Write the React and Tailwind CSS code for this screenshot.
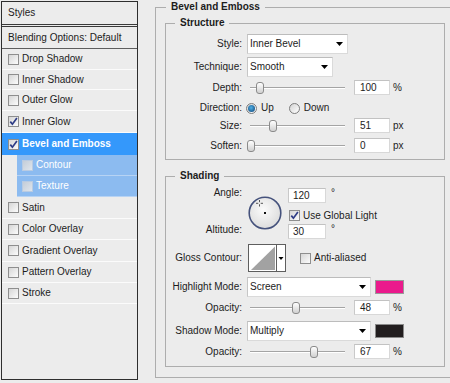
import React from "react";

// Layer Style dialog (Photoshop) – Bevel and Emboss page

const styleRows = [
  { name: "Drop Shadow", h: "h-[21px]" },
  { name: "Inner Shadow", h: "h-[20px]" },
  { name: "Outer Glow", h: "h-[21px]" },
  { name: "Inner Glow", h: "h-[22px]", checked: true },
  { name: "Bevel and Emboss", h: "h-[22px]", checked: true, active: true },
  { name: "Contour", h: "h-[21px]", sub: true },
  { name: "Texture", h: "h-[21px]", sub: true },
  { name: "Satin", h: "h-[22px]" },
  { name: "Color Overlay", h: "h-[21px]" },
  { name: "Gradient Overlay", h: "h-[22px]" },
  { name: "Pattern Overlay", h: "h-[21px]" },
  { name: "Stroke", h: "h-[21px]" },
];

function Check({ checked, dim, className = "" }) {
  return (
    <span
      className={`flex h-[11px] w-[11px] shrink-0 items-center justify-center border ${
        dim
          ? "border-[#b9cbe2] bg-linear-to-br from-[#c4cdd8] to-[#dfe5ec]"
          : "border-[#8e8e8e] bg-linear-to-br from-[#d6d6d6] to-[#fcfcfc]"
      } ${className}`}
    >
      {checked && (
        <svg width="9" height="9" viewBox="0 0 9 9">
          <path d="M1.3 4.6 L3.4 7.2 L7.9 1" fill="none" stroke="#2e3c86" strokeWidth="1.7" />
        </svg>
      )}
    </span>
  );
}

function StylesPanel() {
  return (
    <div className="ml-[1px] mt-[1px] flex h-[379px] w-[137px] shrink-0 flex-col border border-[#2e2e2e]">
      <div className="flex h-[25px] items-center border-b-[3px] border-double border-[#3a3a3a] pl-[6px]">Styles</div>
      <div className="flex h-[22px] items-center border-b border-[#5e5e5e] pl-[6px]">Blending Options: Default</div>
      {styleRows.map((r) =>
        r.sub ? (
          <div key={r.name} className={`flex ${r.h} pl-[15px]`}>
            <div className="flex flex-1 items-center border-b border-[#b7d3f4] bg-[#8cbbf0] pl-[5px] text-white">
              <Check dim />
              <span className="ml-[3px]">{r.name}</span>
            </div>
          </div>
        ) : r.active ? (
          <div key={r.name} className={`flex ${r.h} items-center bg-[#3498fb] pl-[6px] font-bold text-white`}>
            <Check checked />
            <span className="ml-[3px]">{r.name}</span>
          </div>
        ) : (
          <div key={r.name} className={`flex ${r.h} items-center border-b border-[#fbfbfb] pl-[6px]`}>
            <Check checked={r.checked} />
            <span className="ml-[3px]">{r.name}</span>
          </div>
        )
      )}
    </div>
  );
}

function Label({ children }) {
  return <span className="w-[76px] shrink-0 text-right">{children}</span>;
}

function Arrow() {
  return (
    <svg width="7" height="4" viewBox="0 0 7 4" className="shrink-0">
      <path d="M0 0h7L3.5 4z" fill="#000" />
    </svg>
  );
}

function Select({ value, w }) {
  return (
    <div
      className={`ml-[5px] flex h-full shrink-0 items-center justify-between border border-[#dadada] border-l-[#c6c6c6] border-t-[#bcbcbc] bg-white pl-[2px] pr-[4px] ${w}`}
    >
      <span>{value}</span>
      <Arrow />
    </div>
  );
}

function Slider({ pos }) {
  return (
    <div className="relative ml-[5px] h-full w-[100px] shrink-0">
      <div className="absolute left-[3px] right-[2px] top-[7px] h-[2px] border-b border-t border-b-white border-t-[#a4a4a4]" />
      <div
        className="absolute top-[2px] h-[12px] w-[8px] rounded-[3px] border border-[#8b8b8b] bg-linear-to-b from-white to-[#d0d0d0]"
        style={{ left: pos }}
      />
    </div>
  );
}

function Field({ value, className = "ml-[7px] w-[36px] pl-[5px]" }) {
  return (
    <div className={`flex h-full shrink-0 items-center border border-[#d8d8d8] border-l-[#c9c9c9] border-t-[#c2c2c2] bg-white ${className}`}>
      {value}
    </div>
  );
}

function SliderRow({ label, pos, value, unit, mt }) {
  return (
    <div className={`flex h-[15px] items-center ${mt}`}>
      <Label>{label}</Label>
      <Slider pos={pos} />
      <Field value={value} />
      <span className="ml-[3px]">{unit}</span>
    </div>
  );
}

function Radio({ on, className = "" }) {
  return (
    <span
      className={`flex h-[11px] w-[11px] shrink-0 items-center justify-center rounded-full border border-[#7d7d7d] bg-linear-to-br from-[#d4d4d4] to-white ${className}`}
    >
      {on && <span className="h-[7px] w-[7px] rounded-full bg-radial-[at_45%_40%] from-[#4fb0e6] to-[#0b3e72]" />}
    </span>
  );
}

function AngleDial() {
  return (
    <svg width="34" height="34" viewBox="0 0 34 34" className="ml-[6px] mt-[14px] shrink-0">
      <defs>
        <radialGradient id="dialFill" cx="45%" cy="40%" r="65%">
          <stop offset="0" stopColor="#fbfbfb" />
          <stop offset="1" stopColor="#dadada" />
        </radialGradient>
      </defs>
      <circle cx="17" cy="17" r="15.8" fill="url(#dialFill)" stroke="#45527c" strokeWidth="1.6" />
      <path d="M11.5 4v2.2M11.5 8.3v2.2M8 7.3h2.3M12.7 7.3h2.3" stroke="#555" strokeWidth="1" />
      <rect x="16" y="16" width="2" height="2" fill="#111" />
    </svg>
  );
}

function ContourPicker() {
  return (
    <svg width="38" height="28" viewBox="0 0 38 28" className="ml-[6px] shrink-0">
      <rect x="0.5" y="0.5" width="37" height="27" fill="#fff" stroke="#5e5e5e" />
      <path d="M3 26 L27 2.5 L27 26 Z" fill="#a2a2a2" />
      <line x1="28.5" y1="1" x2="28.5" y2="27" stroke="#5e5e5e" />
      <path d="M30.5 13h5l-2.5 3z" fill="#000" />
    </svg>
  );
}

function Degree({ value }) {
  return (
    <div className="flex h-[15px]">
      <Field value={value} className="w-[38px] pl-[4px]" />
      <span className="ml-[5px] self-start leading-[10px]">°</span>
    </div>
  );
}

function Group({ title, className, children }) {
  return (
    <fieldset className={`w-[280px] border border-[#adadad] ${className}`}>
      <legend className="ml-[9px] px-[5px] font-bold">{title}</legend>
      {children}
    </fieldset>
  );
}

export default function App() {
  return (
    <div className="flex h-[383px] w-[450px] overflow-hidden bg-[#ececec] font-['Liberation_Sans',Arial,sans-serif] text-[10px] leading-[12px] text-[#1c1c1c]">
      <StylesPanel />

      <div className="ml-[17px] shrink-0 pt-[1px]">
        <fieldset className="w-[320px] border border-[#adadad] pb-[10px] pl-[9px]">
          <legend className="ml-[1px] px-[5px] font-bold">Bevel and Emboss</legend>

          <Group title="Structure" className="mt-[4px] pb-[6px]">
            <div className="mt-[5px] flex h-[20px] items-center">
              <Label>Style:</Label>
              <Select value="Inner Bevel" w="w-[101px]" />
            </div>
            <div className="mt-[3px] flex h-[20px] items-center">
              <Label>Technique:</Label>
              <Select value="Smooth" w="w-[86px]" />
            </div>
            <SliderRow label="Depth:" pos={9} value="100" unit="%" mt="mt-[3px]" />
            <div className="mt-[6px] flex h-[14px] items-center">
              <Label>Direction:</Label>
              <Radio on className="ml-[4px]" />
              <span className="ml-[4px]">Up</span>
              <Radio className="ml-[15px]" />
              <span className="ml-[4px]">Down</span>
            </div>
            <SliderRow label="Size:" pos={22} value="51" unit="px" mt="mt-[3px]" />
            <SliderRow label="Soften:" pos={0} value="0" unit="px" mt="mt-[5px]" />
          </Group>

          <Group title="Shading" className="mt-[10px] pb-[7px]">
            <div className="flex h-[57px]">
              <div className="w-[76px] shrink-0 text-right">
                <div className="mt-[5px]">Angle:</div>
                <div className="mt-[25px]">Altitude:</div>
              </div>
              <AngleDial />
              <div className="ml-[6px] flex flex-col">
                <div className="mt-[6px]">
                  <Degree value="120" />
                </div>
                <div className="mt-[6px] flex h-[13px] items-center">
                  <Check checked className="ml-[1px]" />
                  <span className="ml-[3px]">Use Global Light</span>
                </div>
                <div className="mt-[2px]">
                  <Degree value="30" />
                </div>
              </div>
            </div>

            <div className="mt-[5px] flex h-[28px] items-center">
              <Label>Gloss Contour:</Label>
              <ContourPicker />
              <Check className="ml-[14px]" />
              <span className="ml-[3px]">Anti-aliased</span>
            </div>

            <div className="mt-[5px] flex h-[20px] items-center">
              <Label>Highlight Mode:</Label>
              <Select value="Screen" w="w-[124px]" />
              <span className="ml-[4px] h-[14px] w-[29px] shrink-0 border border-[#9a9a9a] bg-[#ea1a8c]" />
            </div>
            <SliderRow label="Opacity:" pos={45} value="48" unit="%" mt="mt-[3px]" />
            <div className="mt-[6px] flex h-[20px] items-center">
              <Label>Shadow Mode:</Label>
              <Select value="Multiply" w="w-[124px]" />
              <span className="ml-[4px] h-[14px] w-[29px] shrink-0 border border-[#8a8a8a] bg-[#221e1f]" />
            </div>
            <SliderRow label="Opacity:" pos={63} value="67" unit="%" mt="mt-[3px]" />
          </Group>
        </fieldset>
      </div>
    </div>
  );
}
